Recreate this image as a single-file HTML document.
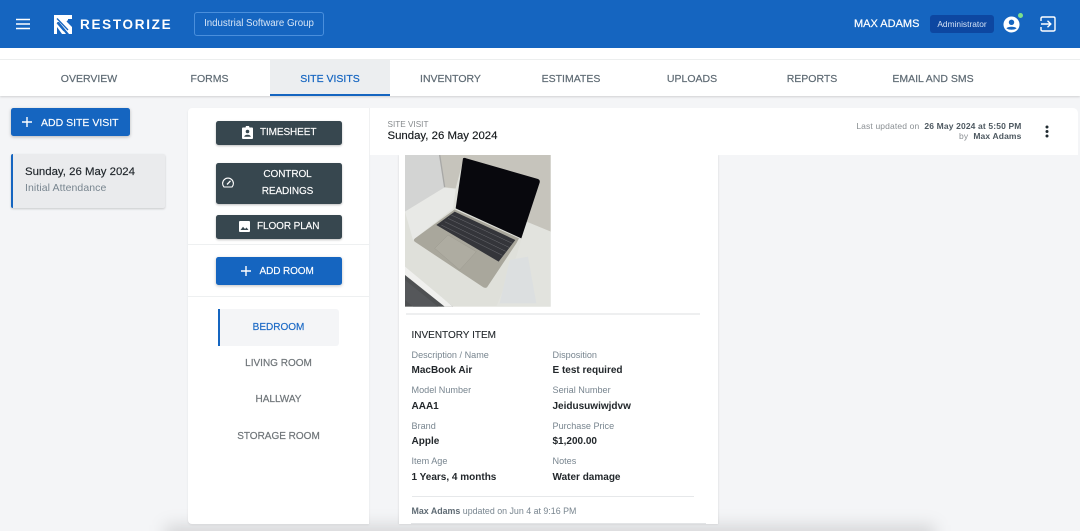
<!DOCTYPE html>
<html><head><meta charset="utf-8">
<style>
html,body{margin:0;padding:0;width:1080px;height:531px;overflow:hidden;background:#f4f5f7;font-family:"Liberation Sans",sans-serif}
#root{position:absolute;left:0;top:0;width:1080px;height:531px;overflow:hidden;background:#f4f5f7}
div,span,svg{position:absolute;box-sizing:border-box}
b,i{position:static}
.t{white-space:nowrap}
.c{text-align:center;white-space:nowrap}
.tab{top:71.5px;width:120px;font-size:10.5px;line-height:14px;color:#5f6b74;text-align:center;white-space:nowrap;-webkit-text-stroke:.2px #5f6b74}
.dk{left:215.5px;width:126px;background:#37474f;border-radius:2.5px;box-shadow:0 1px 2px rgba(0,0,0,.25)}
.bl{background:#1565c0;border-radius:2.5px;box-shadow:0 1px 3px rgba(0,0,0,.25)}
.bt{color:#fff;font-size:10px;line-height:14px;letter-spacing:-.1px;-webkit-text-stroke:.15px #fff}
.room{left:218px;width:121px;text-align:center;font-size:10px;line-height:14px;color:#6f7579;white-space:nowrap;-webkit-text-stroke:.2px #6f7579}
.lab{font-size:9.1px;line-height:12px;color:#78858f;white-space:nowrap}
.val{font-size:10px;line-height:13px;color:#22272b;font-weight:bold;white-space:nowrap}
</style></head>
<body>
<div id="root">
<!-- header -->
<div style="left:0;top:0;width:1080px;height:48px;background:#1565c0"></div>
<svg style="left:15px;top:18px" width="16" height="12"><path d="M1 1.5h14M1 6h14M1 10.500h14" stroke="#fff" stroke-width="1.500"/></svg>
<svg style="left:54px;top:15px" width="18" height="19" viewBox="0 0 18 19">
<path d="M0 0H18V4H10L18 12V7L18 19H15L5 7H3L12 19H8L3 12V19H0Z" fill="#fff"/>
<path d="M5 3H14V5L10 9Z" fill="#fff"/><path d="M3 3.500L14 15" stroke="#1565c0" stroke-width="1.300"/><path d="M3 8L10 16" stroke="#1565c0" stroke-width="1"/>
</svg>
<div class="t" style="left:80px;top:16px;font-size:13.500px;line-height:17px;font-weight:bold;color:#fff;letter-spacing:1.700px">RESTORIZE</div>
<div style="left:194px;top:12px;width:130px;height:24px;border:1px solid #4a8fdc;border-radius:3px"></div>
<div class="c" style="left:194px;top:18px;width:130px;font-size:9.700px;line-height:12px;color:#d8e6f6">Industrial Software Group</div>
<div class="t" style="left:854px;top:17px;font-size:11px;line-height:14px;color:#fff;-webkit-text-stroke:.2px #fff">MAX ADAMS</div>
<div style="left:930px;top:15px;width:64px;height:18px;background:#0d47a1;border-radius:3px"></div>
<div class="c" style="left:930px;top:18px;width:64px;font-size:8.400px;line-height:12px;color:#d4e2f5">Administrator</div>
<svg style="left:1003px;top:16px" width="17" height="17" viewBox="0 0 17 17"><circle cx="8.500" cy="8.500" r="8" fill="#fff"/><circle cx="8.500" cy="6.300" r="2.700" fill="#1565c0"/><path d="M3.500 12.300C5 10.300 12 10.300 13.500 12.300C12 14.200 5 14.200 3.500 12.300Z" fill="#1565c0"/></svg>
<div style="left:1017.500px;top:12.500px;width:5.500px;height:5.500px;border-radius:50%;background:#7de08a"></div>
<svg style="left:1040px;top:16px" width="16" height="16" viewBox="0 0 16 16"><path d="M1 5V2.500Q1 1 2.500 1H13.500Q15 1 15 2.500V13.500Q15 15 13.500 15H2.500Q1 15 1 13.500V11" fill="none" stroke="#fff" stroke-width="1.400"/><path d="M1 8H10.500M7.500 4.800L10.800 8L7.500 11.200" fill="none" stroke="#fff" stroke-width="1.400"/></svg>
<!-- tab bar -->
<div style="left:0;top:48px;width:1080px;height:12px;background:#fff;border-bottom:1px solid #eef0f1"></div>
<div style="left:0;top:60px;width:1080px;height:36px;background:#fff;box-shadow:0 1px 2px rgba(0,0,0,.15)"></div>
<div style="left:270px;top:60px;width:120px;height:36px;background:#eceef0;border-bottom:2px solid #1565c0"></div>
<div class="tab" style="left:29px">OVERVIEW</div>
<div class="tab" style="left:149.500px">FORMS</div>
<div class="tab" style="left:270px;color:#1565c0;-webkit-text-stroke:.2px #1565c0">SITE VISITS</div>
<div class="tab" style="left:390.500px">INVENTORY</div>
<div class="tab" style="left:511px">ESTIMATES</div>
<div class="tab" style="left:632px">UPLOADS</div>
<div class="tab" style="left:752px">REPORTS</div>
<div class="tab" style="left:873px">EMAIL AND SMS</div>
<!-- left column -->
<div class="bl" style="left:10.500px;top:108px;width:119.500px;height:28px"></div>
<svg style="left:22px;top:117px" width="10" height="10"><path d="M5 0V10M0 5H10" stroke="#fff" stroke-width="1.400"/></svg>
<div class="t bt" style="left:41px;top:115.500px;font-size:10.500px;letter-spacing:0">ADD SITE VISIT</div>
<div style="left:10.500px;top:153.500px;width:154.500px;height:54px;background:#eaebed;border-left:2.500px solid #1565c0;border-radius:2px;box-shadow:0 1px 2px rgba(0,0,0,.18)"></div>
<div class="t" style="left:25px;top:165px;font-size:11.400px;line-height:14px;color:#20262b;-webkit-text-stroke:.15px #20262b">Sunday, 26 May 2024</div>
<div class="t" style="left:25px;top:181.500px;font-size:10.500px;line-height:13px;color:#78858f;letter-spacing:.08px">Initial Attendance</div>
<!-- bottom shadow -->
<div style="left:165px;top:525px;width:770px;height:30px;background:rgba(0,0,0,.12);filter:blur(8px)"></div>
<!-- room panel -->
<div style="left:188px;top:108px;width:181px;height:416px;background:#fff;border-radius:4px 0 0 4px;box-shadow:0 1px 2px rgba(0,0,0,.07)"></div>
<div class="dk" style="top:121px;height:24px"></div>
<svg style="left:242px;top:126px" width="11" height="13" viewBox="0 0 11 13"><path d="M1 1.500H3.500L4 0H7L7.500 1.500H10Q11 1.500 11 2.500V12Q11 13 10 13H1Q0 13 0 12V2.500Q0 1.500 1 1.500Z" fill="#fff"/><circle cx="5.500" cy="5.500" r="1.800" fill="#37474f"/><path d="M2.200 10.800C2.500 8 8.500 8 8.800 10.800Z" fill="#37474f"/></svg>
<div class="t bt" style="left:260px;top:126px">TIMESHEET</div>
<div class="dk" style="top:162.500px;height:41px"></div>
<svg style="left:222px;top:177px" width="12" height="12" viewBox="0 0 12 12"><path d="M2 10Q.6 8.500 .6 6.500A5.400 5.400 0 0 1 11.400 6.500Q11.400 8.500 10 10Z" fill="none" stroke="#fff" stroke-width="1.100"/><path d="M5 7.500L8.500 3.800" stroke="#fff" stroke-width="1.300"/></svg>
<div class="c bt" style="left:245px;top:168px;width:85px">CONTROL</div>
<div class="c bt" style="left:245px;top:184.500px;width:85px">READINGS</div>
<div class="dk" style="top:215px;height:23.500px"></div>
<svg style="left:239px;top:221px" width="11" height="11" viewBox="0 0 11 11"><rect width="11" height="11" rx="1" fill="#fff"/><path d="M1.500 9L4 5.800L6 8L7.500 6.500L9.500 9Z" fill="#37474f"/></svg>
<div class="t bt" style="left:257px;top:220px">FLOOR PLAN</div>
<div style="left:188px;top:244px;width:181px;height:1px;background:#eef0f1"></div>
<div class="bl" style="left:215.500px;top:257px;width:126px;height:27.500px"></div>
<svg style="left:241px;top:266px" width="10" height="10"><path d="M5 0V10M0 5H10" stroke="#fff" stroke-width="1.400"/></svg>
<div class="t bt" style="left:259.500px;top:264.500px">ADD ROOM</div>
<div style="left:188px;top:296px;width:181px;height:1px;background:#eef0f1"></div>
<div style="left:218px;top:309px;width:121px;height:36.500px;background:#f4f5f7;border-left:2px solid #1565c0;border-radius:0 3px 3px 0"></div>
<div class="room" style="top:321px;color:#1e6bc6;-webkit-text-stroke:.2px #1e6bc6">BEDROOM</div>
<div class="room" style="top:357px">LIVING ROOM</div>
<div class="room" style="top:393px">HALLWAY</div>
<div class="room" style="top:429.500px">STORAGE ROOM</div>
<!-- inventory card -->
<div style="left:399px;top:155px;width:319px;height:369px;background:#fff;box-shadow:0 0 2px rgba(0,0,0,.14)"></div>
<svg style="left:405.330px;top:155px" width="145.670" height="151.670" viewBox="106 165 437 455" preserveAspectRatio="none">
<rect x="106" y="165" width="437" height="455" fill="#dfe0da"/>
<path d="M210 165H543V395L470 365L510 240L282 175L258 265L225 262Z" fill="#c6c4bc"/>
<path d="M106 165H210L225 262L106 335Z" fill="#d3d4d3"/>
<path d="M210 165L225 262" stroke="#a8a8a6" stroke-width="4"/>
<path d="M106 335L225 262L258 268L250 325L130 420Z" fill="#e8e9e6"/>
<path d="M470 365L543 395V620H380L440 470Z" fill="#e2e3de"/>
<path d="M420 480L475 470L500 610H390Z" fill="#dcdfe0"/>
<path d="M106 505L250 620H106Z" fill="#4e5052"/>
<path d="M106 500L250 620H225L106 525Z" fill="#f0f0ee"/>
<path d="M106 540L205 620H130L106 600Z" fill="#55575a"/>
<path d="M280 175Q284 172 290 175L505 237Q512 240 510 248L455 415L258 325Z" fill="#08080d"/>
<path d="M255 328L448 415L440 430L352 562Q345 566 338 560L135 425Q130 420 136 415Z" fill="#a9a79c"/>
<path d="M255 335L437 420L387 485L200 375Z" fill="#34353a"/>
<path d="M235 405L320 455L270 510L195 445Z" fill="#aeaca1" stroke="#95938a"/>
<path d="M245 345L428 430M235 355L418 442M225 365L408 454M215 375L398 466" stroke="#6c6d72" stroke-width="1.500" fill="none"/>
</svg>
<div style="left:405.500px;top:313px;width:294px;height:2px;background:#eeeff0"></div>
<div class="t" style="left:411.500px;top:328.500px;font-size:10px;line-height:14px;color:#23282c;-webkit-text-stroke:.1px #23282c">INVENTORY ITEM</div>
<div class="lab" style="left:411.500px;top:349px">Description / Name</div>
<div class="val" style="left:411.500px;top:364px">MacBook Air</div>
<div class="lab" style="left:552.500px;top:349px">Disposition</div>
<div class="val" style="left:552.500px;top:364px">E test required</div>
<div class="lab" style="left:411.500px;top:384px">Model Number</div>
<div class="val" style="left:411.500px;top:399.500px">AAA1</div>
<div class="lab" style="left:552.500px;top:384px">Serial Number</div>
<div class="val" style="left:552.500px;top:399.500px">Jeidusuwiwjdvw</div>
<div class="lab" style="left:411.500px;top:420px">Brand</div>
<div class="val" style="left:411.500px;top:435px">Apple</div>
<div class="lab" style="left:552.500px;top:420px">Purchase Price</div>
<div class="val" style="left:552.500px;top:435px">$1,200.00</div>
<div class="lab" style="left:411.500px;top:455px">Item Age</div>
<div class="val" style="left:411.500px;top:470.500px">1 Years, 4 months</div>
<div class="lab" style="left:552.500px;top:455px">Notes</div>
<div class="val" style="left:552.500px;top:470.500px">Water damage</div>
<div style="left:411.500px;top:496px;width:282px;height:1px;background:#e6e8ea"></div>
<div class="t" style="left:411.500px;top:505px;font-size:8.850px;line-height:12px;color:#78858f"><b style="color:#5f6b74">Max Adams</b> updated on Jun 4 at 9:16 PM</div>
<div style="left:411px;top:522.500px;width:295px;height:1px;background:#e2e4e6"></div>
<!-- content header -->
<div style="left:369px;top:108px;width:709px;height:47px;background:#fff;border-radius:0 5px 0 0;border-left:1px solid #f0f1f2"></div>
<div class="t" style="left:387.500px;top:119px;font-size:8.200px;line-height:11px;color:#85898c">SITE VISIT</div>
<div class="t" style="left:387.500px;top:129px;font-size:11.400px;line-height:14px;color:#15191c;-webkit-text-stroke:.15px #15191c">Sunday, 26 May 2024</div>
<div class="t" style="right:58.500px;top:121px;font-size:8.500px;line-height:11px;color:#8a8f93;letter-spacing:.14px">Last updated on &nbsp;<b style="color:#4e5961">26 May 2024 at 5:50 PM</b></div>
<div class="t" style="right:58.500px;top:131px;font-size:8.500px;line-height:11px;color:#8a8f93;letter-spacing:.14px">by &nbsp;<b style="color:#4e5961">Max Adams</b></div>
<svg style="left:1044px;top:125px" width="6" height="14"><circle cx="3" cy="2" r="1.500" fill="#1f2a30"/><circle cx="3" cy="6.500" r="1.500" fill="#1f2a30"/><circle cx="3" cy="11" r="1.500" fill="#1f2a30"/></svg>
</div>
</body></html>
